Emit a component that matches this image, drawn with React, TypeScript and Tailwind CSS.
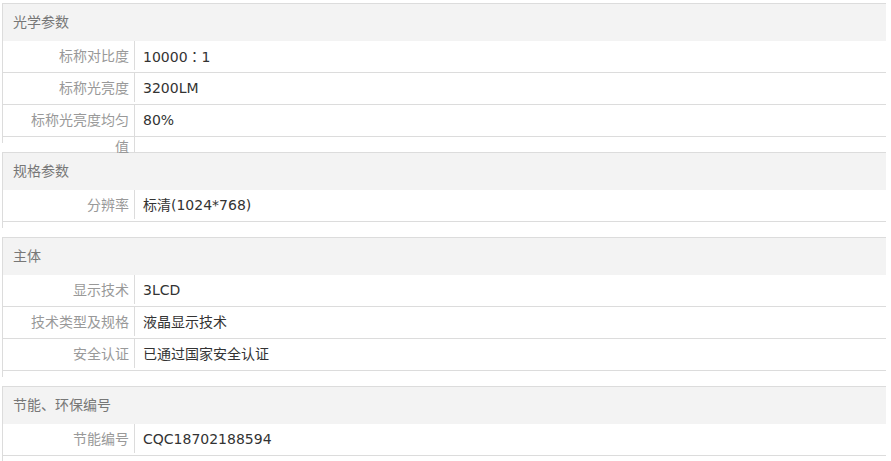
const sections: { title: string; rows: [string, string][] }[] = [
  {
    title: '光学参数',
    rows: [
      ['标称对比度', '10000：1'],
      ['标称光亮度', '3200LM'],
      ['标称光亮度均匀值', '80%'],
    ],
  },
  {
    title: '规格参数',
    rows: [['分辨率', '标清(1024*768)']],
  },
  {
    title: '主体',
    rows: [
      ['显示技术', '3LCD'],
      ['技术类型及规格', '液晶显示技术'],
      ['安全认证', '已通过国家安全认证'],
    ],
  },
  {
    title: '节能、环保编号',
    rows: [['节能编号', 'CQC18702188594']],
  },
];

// full-width colon is centred in the TC cut, left-set in SC
function Value({ text }: { text: string }) {
  const parts = text.split('：');
  if (parts.length === 1) return <>{text}</>;
  return (
    <>
      {parts[0]}
      <span className="font-['Noto_Sans_CJK_TC',sans-serif]">：</span>
      {parts[1]}
    </>
  );
}

export default function App() {
  return (
    <div className="min-h-[461px] w-[891px] bg-white pl-[2px] pt-[3px] font-['DejaVu_Sans','Noto_Sans_CJK_SC',sans-serif] text-[14px]">
      <div className="w-[884px]">
        {sections.map((s) => (
          <div key={s.title} className="mb-[9px] border-l border-t border-[#dcdcdc] pb-[6px]">
            <h3 className="relative z-10 h-[37px] bg-[#f3f3f3] pl-[10px] leading-[37px] text-[#777]">
              {s.title}
            </h3>
            {s.rows.map(([label, value]) => (
              <div key={label} className="flex h-[32px] border-b border-[#dcdcdc]">
                <div className="w-[132px] shrink-0 self-start border-r border-[#dcdcdc] pl-[21px] pr-[5px] pt-[2px] text-right leading-[27px] text-[#999]">
                  {label}
                </div>
                <div className="pl-[8px] pt-[2px] leading-[27px] text-[#333]">
                  <Value text={value} />
                </div>
              </div>
            ))}
          </div>
        ))}
      </div>
    </div>
  );
}
